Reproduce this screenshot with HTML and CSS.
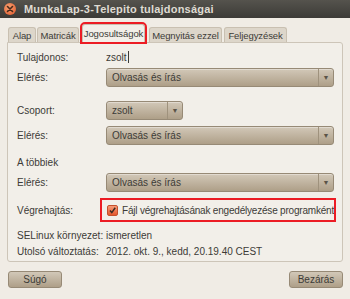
FILE: index.html
```html
<!DOCTYPE html>
<html lang="hu">
  <head>
    <meta charset="UTF-8" />
    <title>MunkaLap-3-Telepito tulajdonságai</title>
    <link rel="stylesheet" href="styles.css">
  </head>
  <body>
    <div class="titlebar">
      <span class="close-btn">
        <svg width="8" height="8" viewBox="0 0 8 8"><path d="M1.5 1.5 L6.5 6.5 M6.5 1.5 L1.5 6.5" stroke="#4a2a1a" stroke-width="1.6" stroke-linecap="round"/></svg>
      </span>
      <span class="title">MunkaLap-3-Telepito tulajdonságai</span>
    </div>

    <div class="window">
      <div class="tabs">
        <div class="tab t-alap">Alap</div>
        <div class="tab t-matr">Matricák</div>
        <div class="tab t-jog active marked">Jogosultságok</div>
        <div class="tab t-megn">Megnyitás ezzel</div>
        <div class="tab t-felj">Feljegyzések</div>
      </div>

      <div class="panel">
        <div class="row text-row">
          <span class="label">Tulajdonos:</span>
          <span class="value">zsolt<span class="caret"></span></span>
        </div>
        <div class="row combo-row gap-s">
          <span class="label">Elérés:</span>
          <div class="combo wide"><span>Olvasás és írás</span><span class="arrow">▼</span></div>
        </div>

        <div class="row combo-row gap-l">
          <span class="label">Csoport:</span>
          <div class="combo small"><span>zsolt</span><span class="arrow">▼</span></div>
        </div>
        <div class="row combo-row gap-m">
          <span class="label">Elérés:</span>
          <div class="combo wide"><span>Olvasás és írás</span><span class="arrow">▼</span></div>
        </div>

        <div class="row text-row gap-h">
          <span class="label">A többiek</span>
        </div>
        <div class="row combo-row gap-s">
          <span class="label">Elérés:</span>
          <div class="combo wide"><span>Olvasás és írás</span><span class="arrow">▼</span></div>
        </div>

        <div class="row check-row gap-c">
          <span class="label">Végrehajtás:</span>
          <label class="check marked">
            <span class="box">
              <svg width="9" height="9" viewBox="0 0 9 9"><path d="M2 4.5 L3.8 6.6 L7.2 1.8" fill="none" stroke="#3a2a22" stroke-width="1.5"/></svg>
            </span>
            Fájl végrehajtásának engedélyezése programként
          </label>
        </div>

        <div class="row text-row gap-t">
          <span class="label">SELinux környezet:</span>
          <span class="value">ismeretlen</span>
        </div>
        <div class="row text-row">
          <span class="label">Utolsó változtatás:</span>
          <span class="value">2012. okt. 9., kedd, 20.19.40 CEST</span>
        </div>
      </div>

      <div class="buttons">
        <button class="btn">Súgó</button>
        <button class="btn">Bezárás</button>
      </div>
    </div>
  </body>
</html>
```

FILE: styles.css
```css
body {
  margin: 0;
  width: 350px;
  height: 299px;
  overflow: hidden;
  background: #f0ece5;
  font-family: "Liberation Sans", "DejaVu Sans", sans-serif;
  font-size: 10px;
  color: #3c3b37;
}

.titlebar {
  height: 18px;
  background: linear-gradient(#55534d, #3c3b37);
  display: flex;
  align-items: center;
  padding-left: 4px;
  gap: 8px;
}

.close-btn {
  width: 12px;
  height: 12px;
  border-radius: 50%;
  background: radial-gradient(circle at 40% 35%, #f7a070, #e0562a);
  display: flex;
  align-items: center;
  justify-content: center;
}

.title {
  color: #dfdbd2;
  font-weight: bold;
  font-size: 11px;
  letter-spacing: 0.2px;
}

.window {
  padding: 6px 7px 0 7px;
}

.tabs {
  display: flex;
  align-items: flex-end;
  height: 18px;
  padding-left: 1px;
}

.tab {
  height: 15px;
  line-height: 15px;
  box-sizing: border-box;
  text-align: center;
  font-size: 9.5px;
  letter-spacing: -0.1px;
  background: #ddd6ca;
  border: 1px solid #c9c0b1;
  border-bottom: none;
  border-radius: 3px 3px 0 0;
  white-space: nowrap;
}

.t-alap { width: 28px; }
.t-matr { width: 42px; margin-left: 1px; }
.t-jog { width: 63px; margin-left: 3px; }
.t-megn { width: 73px; margin-left: 4px; }
.t-felj { width: 63px; margin-left: 2px; }

.tab.active {
  height: 18px;
  line-height: 17px;
  background: #f2efe9;
  position: relative;
  z-index: 2;
}

.marked {
  outline: 2px solid #ec1c24;
  outline-offset: 0;
}

.panel {
  border: 1px solid #cdc5b8;
  border-radius: 0 3px 3px 3px;
  background: #f2efe9;
  height: 220px;
  box-sizing: border-box;
  padding: 6px 8px 0 9px;
}

.row {
  display: flex;
  align-items: center;
}

.label {
  width: 89px;
  flex-shrink: 0;
  white-space: nowrap;
}

.text-row {
  height: 16px;
}

.combo-row {
  height: 20px;
}

.check-row {
  height: 20px;
}

.gap-s { margin-top: 2px; }
.gap-l { margin-top: 13px; }
.gap-m { margin-top: 5px; }
.gap-h { margin-top: 9px; }
.gap-c { margin-top: 8px; }
.gap-t { margin-top: 7px; }

.value {
  display: flex;
  align-items: center;
}

.caret {
  width: 1px;
  height: 12px;
  background: #3c3b37;
  margin-left: 1px;
}

.combo {
  height: 19px;
  box-sizing: border-box;
  border: 1px solid #978a76;
  border-radius: 3px;
  background: linear-gradient(#d2c8b8, #ae9f88);
  display: flex;
  align-items: center;
  justify-content: space-between;
  padding-left: 5px;
  box-shadow: inset 0 1px 0 rgba(255, 255, 255, 0.35);
}

.combo.wide {
  width: 228px;
}

.combo.small {
  width: 77px;
}

.arrow {
  width: 14px;
  height: 100%;
  border-left: 1px solid #9f927d;
  font-size: 7px;
  color: #5a5348;
  display: flex;
  align-items: center;
  justify-content: center;
}

.check {
  display: flex;
  align-items: center;
  gap: 4px;
  height: 20px;
  box-sizing: border-box;
  width: 236px;
  margin-left: -4px;
  padding-left: 5px;
  white-space: nowrap;
  letter-spacing: -0.2px;
}

.box {
  width: 9px;
  height: 9px;
  border-radius: 2px;
  background: linear-gradient(#f79a76, #e4582e);
  border: 1px solid #c5502c;
  display: flex;
  align-items: center;
  justify-content: center;
}

.buttons {
  display: flex;
  justify-content: space-between;
  margin-top: 9px;
  padding: 0 0 0 1px;
}

.btn {
  font-family: "Liberation Sans", "DejaVu Sans", sans-serif;
  font-size: 10px;
  color: #3c3b37;
  height: 17px;
  width: 54px;
  padding: 0;
  border: 1px solid #978a76;
  border-radius: 3px;
  background: linear-gradient(#d2c8b8, #ae9f88);
}
```
